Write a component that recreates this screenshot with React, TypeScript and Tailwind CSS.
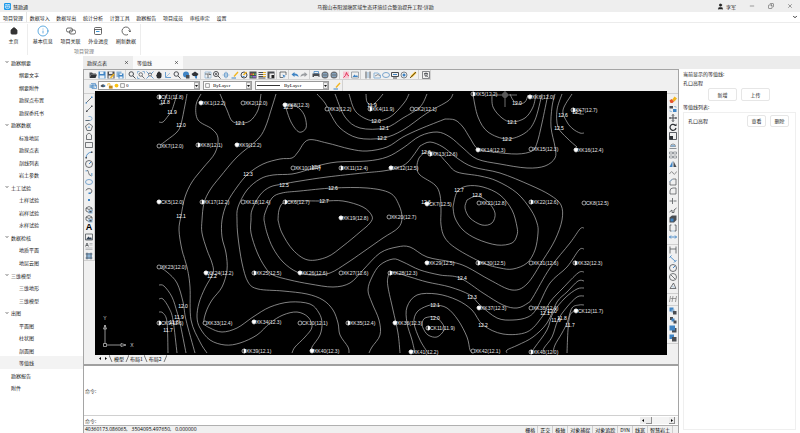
import React from "react";
import { ChevronDown, Copy, House, Info, Minus, RefreshCw, User, X } from "lucide-react";

const K = "#4a4d52";
const B = "#3f84c4";
const L = "#8db4d6";
const Y = "#f2b51d";

type Shape = { d: string; s?: string; f?: string; w?: number };

const glyphs: Record<string, Shape[]> = {
  open: [{ d: "M1 3h5l2 2h6v2H4l-3 6z", f: K }, { d: "M4 7h12l-3 7H1z", f: "#2f3236" }],
  save: [{ d: "M1 1h14v14H1z", f: B }, { d: "M4 1h7v5H4zM3 9h10v6H3z", f: "#e6eef6" }],
  saveAs: [{ d: "M1 1h14v14H1z", f: K }, { d: "M4 1h7v5H4zM3 9h10v6H3z", f: "#e6e6e6" }, { d: "M7 14l7-8", s: Y, w: 3 }],
  saveAll: [{ d: "M1 1h10v11H1z", f: L }, { d: "M5 5h10v10H5z", f: B }, { d: "M7 5h5v3H7zM7 11h6v4H7z", f: "#eef3f8" }],
  zoom: [{ d: "M2 6a4.500 4.500 0 1 0 9 0a4.500 4.500 0 1 0 -9 0M10 10l5 5", s: K, w: 2 }],
  zoomPlus: [{ d: "M1 6a5 5 0 1 0 10 0a5 5 0 1 0 -10 0M10 10l5 5M4 6h4M6 4v4", s: K, w: 2 }],
  zoomWin: [{ d: "M1 5V1h4M11 1h4v4M1 11v4h4", s: L, w: 2 }, { d: "M4 7a3 3 0 1 0 7 0a3 3 0 1 0 -7 0M10 10l5 5", s: K, w: 1.5 }],
  extents: [{ d: "M1 1l5 5M15 1l-5 5M1 15l5-5M15 15l-5-5", s: B, w: 1.5 }, { d: "M5 7a3 3 0 1 0 6 0a3 3 0 1 0 -6 0", s: K, w: 1.5 }],
  hand: [{ d: "M4 5q0-2 2-2q0-2 2-2t2 2q3 0 3 3v4q0 5-5 5t-5-5L2 8l2-1z", f: "#2c2e31" }],
  axes: [{ d: "M3 2v11h11", s: B, w: 1.5 }, { d: "M3 13l9-9", s: L, w: 1.5 }],
  globe: [{ d: "M2 7a6 6 0 1 0 12 0a6 6 0 1 0 -12 0", f: B }, { d: "M8 8h7v7H8z", f: K }],
  orbit: [{ d: "M1 6l7-5 7 5-3 4H4z", f: "#303338" }, { d: "M7 10h5v5H9z", f: B }],
  area: [{ d: "M2 2h12v12H2z", s: L, w: 1.5 }, { d: "M2 6h6v8M10 3v4h4", s: K, w: 1.5 }],
  pan: [{ d: "M8 1v14M1 8h14", s: L, w: 1.5 }, { d: "M5 4h6v8H5z", s: B, w: 1.2 }],
  brush: [{ d: "M5 10l8-9 2 2-8 9z", f: Y }, { d: "M1 14h9", s: B, w: 2 }],
  target: [{ d: "M2 8a6 6 0 1 0 12 0a6 6 0 1 0 -12 0", s: K, w: 2 }, { d: "M7 8l6-6", s: Y, w: 3 }, { d: "M5 11h4", s: B, w: 2 }],
  palette: [{ d: "M1 1h14v14H1z", f: K }, { d: "M3 5h3v3H3z", f: "#e14b4b" }, { d: "M7 5h3v3H7z", f: Y }, { d: "M11 5h3v3h-3zM3 10h3v3H3z", f: "#4fb36b" }, { d: "M7 10h7v3H7z", f: "#8d6ad0" }],
  lines: [{ d: "M1 3h14M1 7h14M1 11h14M1 14h14", s: K, w: 2 }, { d: "M10 3h5M10 7h5M10 11h5", s: Y, w: 2 }],
  props: [{ d: "M1 1h14v14H1z", f: K }, { d: "M5 5h9v9H5z", f: "#ececec" }, { d: "M9 8h5v6H9z", f: "#222" }],
  select: [{ d: "M14 8V2H2v11h6", s: K, w: 1.5 }, { d: "M7 7l7 3-3 1-1 4z", f: B }],
  undo: [{ d: "M1 7l6-5v3q8 0 8 7q-3-4-8-3v3z", f: B }],
  redo: [{ d: "M15 7L9 2v3q-8 0-8 7q3-4 8-3v3z", f: "#9a9da1" }],
  print: [{ d: "M4 1h9v4H4z", s: B, w: 1.5 }, { d: "M1 5h14v7H1z", f: K }, { d: "M4 10h9v5H4z", f: "#e8e8e8" }],
  printView: [{ d: "M1 8a7 7 0 1 0 14 0a7 7 0 1 0 -14 0", f: "#6b7076" }, { d: "M4 5h8M3 8h10M4 11h8", s: L, w: 1.5 }],
  pdf: [{ d: "M2 1h12v14H2z", f: "#f7c6d2" }, { d: "M3 13q5-3 6-10q1 6 5 7", s: "#e2365d", w: 2 }],
  image: [{ d: "M1 2h14v12H1z", s: "#8a8e93", w: 1.5 }, { d: "M3 12l4-5 3 3 2-2 2 4z", f: B }],
  ruler: [{ d: "M4 1v14M12 1v14", s: "#74787d", w: 2.5 }, { d: "M8 2v12", s: L, w: 2 }],
  region: [{ d: "M2 4h8l5 4v6H2z", s: L, w: 2 }, { d: "M4 10l6-3 4 3", s: K, w: 1.2 }],
  ellipse: [{ d: "M1 8a7 5 0 1 0 14 0a7 5 0 1 0 -14 0", s: "#6b9cc8", w: 1.8 }],
  screen: [{ d: "M1 3h14v8H1zM4 14h8", s: K, w: 2 }, { d: "M4 7h8", s: B, w: 2 }],
  gear: [{ d: "M2 8a6 6 0 1 0 12 0a6 6 0 1 0 -12 0", s: "#74787d", w: 1.8 }, { d: "M5 8a3 3 0 1 0 6 0a3 3 0 1 0 -6 0", f: B }],
  pencil: [{ d: "M2 14l2-5 8-8 3 3-8 8z", f: Y }, { d: "M2 14L14 2", s: "#3c3a30", w: 1.6 }],
  find: [{ d: "M1 1h14v14H1z", s: K, w: 1.3 }, { d: "M5 7a3 3 0 1 0 6 0a3 3 0 1 0 -6 0M4 5h8M8 4v8M10 10l3 3", s: K, w: 1.4 }],
  layers: [{ d: "M1 5h10v7H1z", f: L }, { d: "M4 3h9v6M6 6h9v7H6z", s: B, w: 1.3 }],
  line: [{ d: "M2 14L14 2", s: K, w: 1.5 }, { d: "M1 13h3v2H1zM12 1h3v3h-3z", f: B }],
  ray: [{ d: "M2 14L14 2", s: K, w: 1.5 }, { d: "M2 11h3v3H2zM12 1h3v3h-3z", f: K }],
  pline: [{ d: "M1 13h9q4 0 4-4T10 5H7", s: L, w: 2 }, { d: "M1 13h8", s: K, w: 1.5 }],
  poly: [{ d: "M8 1l7 5-3 9H4L1 6z", s: K, w: 1.5 }, { d: "M6 7h4v3H6z", f: L }],
  house: [{ d: "M3 15V6l5-4 5 4v9z", s: K, w: 1.5 }],
  rect: [{ d: "M1 3h14v10H1z", s: K, w: 1.5 }],
  arc: [{ d: "M2 14Q3 3 14 2", s: B, w: 1.7 }, { d: "M1 12h3v3H1zM12 1h3v3h-3z", f: K }],
  circle: [{ d: "M1 8a7 7 0 1 0 14 0a7 7 0 1 0 -14 0", s: K, w: 1.6 }, { d: "M8 8l4-4", s: B, w: 2 }],
  spline: [{ d: "M2 3q5-2 5 4t7 7", s: K, w: 1.5 }, { d: "M1 2h3v3H1zM12 8h3v6h-3z", f: L }],
  earc: [{ d: "M2 7a6 5 0 1 1 7 6", s: K, w: 1.6 }, { d: "M7 11h4v3H7z", f: B }],
  dot: [{ d: "M6 6h4v4H6z", f: B }],
  block: [{ d: "M2 4l6-3 6 3v6l-6 3-6-3zM2 4l6 3 6-3", s: K, w: 1.5 }, { d: "M7 8h8v7H7z", f: L }, { d: "M9 10h4v3H9z", f: K }],
  pic: [{ d: "M1 2h14v12H1z", s: K, w: 1.5 }, { d: "M2 13l5-6 3 3 2-2 2 5z", f: "#2e3f52" }],
  mtext: [{ d: "M1 9l3-7 3 7M2 7h4", s: K, w: 1.5 }, { d: "M9 3h6M9 6h6M1 12h14M1 15h14", s: "#9a9da1", w: 1.3 }],
  hatch: [{ d: "M2 2h12v12H2z", f: L }, { d: "M1 4h14M1 12h14M4 1v14M12 1v14", s: K, w: 1.2 }],
  erase: [{ d: "M6 8l5-7 5 4-5 6z", f: Y }, { d: "M1 9l4-3 5 5-3 3H3z", f: "#e5532d" }],
  copy: [{ d: "M1 2h7v5H1z", f: K }, { d: "M8 8h7v6H8z", f: B }, { d: "M10 3h4v3M2 9v4h4", s: L, w: 1.5 }],
  move: [{ d: "M8 1v14M1 8h14M6 3l2-2 2 2M6 13l2 2 2-2M3 6L1 8l2 2M13 6l2 2-2 2", s: K, w: 2 }],
  rotate: [{ d: "M12 4a6 6 0 1 0 2 6", s: "#2f3236", w: 2.5 }, { d: "M10 6h5V1z", f: "#2f3236" }],
  scale: [{ d: "M1 1h14v14H1z", s: K, w: 1.8 }, { d: "M1 8h7v7H1z", f: "#2f3236" }],
  offset: [{ d: "M1 13h14M3 9a5 5 0 0 1 10 0z", s: "#74787d", w: 1.6 }, { d: "M4 6h8v3H4z", f: L }],
  array: [{ d: "M1 2h6v4H1zM9 2h6v4H9zM1 10h6v4H1zM9 10h6v4H9z", s: "#858a90", w: 1.6 }],
  mirror: [{ d: "M7 2v12H1z", f: B }, { d: "M9 2v12h6z", f: K }],
  wave: [{ d: "M1 10q4-8 7-2t7-3", s: "#777", w: 1.6 }],
  chamfer: [{ d: "M2 14V7l5-5h7v12z", s: K, w: 1.4 }, { d: "M1 8l6-6", s: L, w: 2 }],
  fillet: [{ d: "M2 14V8q0-6 6-6h6v12z", s: K, w: 1.4 }],
  trim: [{ d: "M1 8h6M9 8h6M7 2v12", s: K, w: 1.5 }],
  extend: [{ d: "M1 12l5-4v5h4V8l5-4", s: K, w: 1.6 }],
  cube: [{ d: "M1 5l5-4h9v9l-5 5H1z", f: K }, { d: "M3 7h6v6H3z", f: B }],
  brk: [{ d: "M5 2H2v12h3M11 2h3v12h-3", s: K, w: 1.6 }, { d: "M5 14h6", s: L, w: 1.5 }],
  join: [{ d: "M1 8h14M4 5L1 8l3 3M12 5l3 3-3 3", s: B, w: 1.8 }],
  dimh: [{ d: "M2 1v14M14 1v14", s: K, w: 1.5 }, { d: "M2 6h12", s: K, w: 1.5 }],
  dima: [{ d: "M2 3l11 10M1 5l4-4M10 15l5-5", s: B, w: 1.7 }],
  diam: [{ d: "M1 8a7 7 0 1 0 14 0a7 7 0 1 0 -14 0M4 4l8 8", s: K, w: 1.5 }],
  angle: [{ d: "M2 13L9 2l5 11z", s: K, w: 1.5 }, { d: "M6 8l5 3", s: L, w: 1.5 }],
  dimc: [{ d: "M1 14l2-12M8 2l-2 12M15 2l-2 12M3 7h11", s: "#777", w: 1.4 }],
  ordA: [{ d: "M1 1h8v8H1z", f: B }, { d: "M5 5h6v6H5z", f: L }, { d: "M8 8h7v7H8z", f: K }],
  ordB: [{ d: "M2 2h6v6H2z", f: K }, { d: "M5 5h6v6H5z", f: B }, { d: "M9 9h6v6H9z", f: K }],
  ordC: [{ d: "M6 6h9v9H6z", f: K }, { d: "M1 1h11v10H1z", f: B }],
  ordD: [{ d: "M1 1h9v9H1z", f: B }, { d: "M6 6h9v9H6z", f: K }],
  eye: [{ d: "M1 8q7-9 14 0q-7 7-14 0", f: K }, { d: "M9 5h4v4H9z", f: B }],
  lock: [{ d: "M2 7V2h6v5", s: Y, w: 2 }, { d: "M5 7h10v8H5z", f: "#c58a18" }],
  sun: [{ d: "M2 8a6 6 0 1 0 12 0a6 6 0 1 0 -12 0", f: "#fbc110" }],
  box: [{ d: "M2 2h12v12H2z", s: "#333", w: 1.5 }],
};

function Glyph({ name, className = "size-2" }: { name: string; className?: string }) {
  return (
    <svg viewBox="0 0 16 16" className={`${className} shrink-0`} aria-hidden="true">
      {glyphs[name].map((p, i) => (
        <path key={i} d={p.d} fill={p.f ?? "none"} stroke={p.s ?? "none"} strokeWidth={p.w ?? 1.5} />
      ))}
    </svg>
  );
}

function Tool({ name }: { name: string }) {
  return (
    <button type="button" aria-label={name} className="flex w-[9px] items-center justify-center">
      <Glyph name={name} />
    </button>
  );
}

const topTools = [
  ["open", "save", "saveAs", "saveAll"],
  ["zoom", "zoomWin", "extents", "hand", "axes", "zoom", "globe", "orbit"],
  ["area", "zoomPlus", "pan", "brush", "target", "palette", "lines", "props"],
  ["select"],
  ["undo", "redo"],
  ["print", "printView", "printView"],
  ["pdf", "image"],
  ["ruler", "region", "ellipse", "screen", "gear", "pencil"],
  ["find"],
];

const drawTools = ["line", "ray", "pline", "poly", "house", "rect", "arc", "circle", "spline", "ellipse", "earc", "dot", "block", "block", "A", "pic", "mtext", "hatch"];

const editTools: { h: string; items: string[] }[] = [
  { h: "h-[147px]", items: ["erase", "copy", "move", "rotate", "scale", "offset", "array", "mirror", "wave", "chamfer", "fillet", "trim", "extend", "cube", "brk", "join"] },
  { h: "h-[46px]", items: ["dimh", "dima", "circle", "diam", "angle"] },
  { h: "h-[9px]", items: ["dimc"] },
  { h: "h-[37px]", items: ["ordA", "ordB", "ordC", "ordD"] },
];

type P = [number, number];

const contours: P[][] = [
  [[159, 104], [163, 104], [167, 94]],
  [[159, 122], [163, 122], [168, 116], [172, 110], [177, 94]],
  [[159, 146], [167, 140], [177, 132], [181, 124], [185, 105], [187, 94]],
  [[201, 94], [196, 105], [198, 120], [212, 129], [218, 138], [215, 153], [203, 168], [192, 182], [185, 197], [181, 216], [179, 230], [182, 250], [187, 267], [190, 287], [191, 320], [200, 342], [207, 353]],
  [[276, 94], [272, 107], [265, 128], [257, 140], [237, 157], [220, 177], [210, 190], [204, 203], [202, 220], [202, 233], [207, 250], [212, 263], [213, 273], [205, 288], [199, 303], [197, 317], [200, 328], [210, 340], [225, 345], [240, 343], [257, 335], [270, 323], [283, 315], [297, 312], [308, 317], [312, 327], [305, 337], [295, 347], [292, 353]],
  [[445, 119], [420, 129], [403, 137], [387, 147], [367, 151], [350, 149], [327, 143], [308, 140], [298, 152], [292, 158], [280, 159], [263, 164], [248, 174], [237, 187], [227, 203], [222, 220], [222, 237], [226, 253], [227, 270], [222, 287], [212, 300], [206, 312], [204, 323], [210, 328], [222, 332], [237, 328], [253, 317], [270, 307], [290, 302], [310, 304], [319, 313], [322, 323], [320, 335], [312, 347], [311, 353]],
  [[445, 119], [455, 120], [463, 127], [470, 138], [478, 149], [493, 152], [517, 154], [532, 151], [537, 143], [542, 123], [548, 94]],
  [[555, 94], [552, 107], [551, 127], [555, 147], [555, 158], [545, 166], [527, 168], [500, 164], [477, 159], [463, 148], [450, 137], [437, 132], [420, 136], [403, 148], [387, 157], [367, 161], [337, 162], [317, 166], [307, 170], [292, 174], [273, 175], [260, 179], [247, 190], [238, 207], [237, 220], [238, 237], [242, 263], [248, 282], [258, 289], [283, 291], [307, 294], [323, 300], [333, 310], [338, 323], [340, 335], [348, 347], [349, 353]],
  [[420, 146], [408, 162], [397, 168], [383, 171], [363, 173], [327, 177], [300, 181], [283, 184], [270, 187], [260, 195], [252, 210], [251, 220], [251, 233], [257, 252], [265, 267], [273, 275], [290, 280], [310, 284], [333, 287], [350, 283], [363, 270], [380, 253], [397, 247], [410, 247], [427, 257], [452, 262], [467, 267], [490, 280], [512, 290], [527, 284], [543, 260], [555, 240], [562, 220], [561, 205], [550, 195], [530, 185], [500, 173], [473, 167], [457, 158], [443, 147], [430, 142], [420, 146]],
  [[264, 220], [265, 213], [272, 198], [282, 193], [300, 191], [333, 188], [367, 188], [390, 193], [399, 205], [402, 218], [398, 228], [383, 238], [363, 252], [347, 263], [330, 273], [313, 275], [297, 272], [283, 262], [273, 248], [267, 233], [264, 220]],
  [[278, 220], [279, 210], [283, 203], [293, 201], [323, 201], [343, 201], [363, 207], [372, 216], [370, 223], [360, 232], [343, 246], [327, 257], [308, 260], [293, 250], [282, 233], [278, 220]],
  [[349, 94], [356, 112], [373, 121], [390, 117], [404, 103], [409, 94]],
  [[335, 94], [345, 117], [360, 128], [385, 128], [403, 118], [420, 107], [427, 94]],
  [[317, 94], [325, 103], [330, 113], [340, 128], [358, 138], [383, 138], [403, 130], [427, 113], [448, 101], [453, 94]],
  [[366, 94], [367, 102], [372, 105], [378, 100], [383, 94]],
  [[220, 94], [227, 110], [232, 121], [240, 123], [250, 121], [258, 110], [261, 94]],
  [[285, 105], [291, 122], [299, 132], [306, 128], [305, 117], [300, 109], [293, 105], [285, 105]],
  [[425, 152], [419, 158], [417, 167], [420, 175], [435, 185], [440, 195], [441, 210], [441, 225], [445, 238], [457, 249], [483, 263], [500, 268], [513, 269], [527, 263], [535, 250], [538, 233], [537, 223], [531, 210], [517, 193], [497, 181], [480, 176], [457, 172], [447, 163], [437, 153], [425, 152]],
  [[453, 207], [457, 192], [467, 186], [483, 187], [500, 195], [512, 210], [517, 227], [517, 235], [512, 243], [497, 245], [477, 239], [463, 230], [455, 218], [453, 207]],
  [[467, 200], [477, 196], [488, 202], [495, 213], [492, 223], [482, 225], [470, 218], [465, 208], [467, 200]],
  [[473, 95], [478, 117], [488, 132], [507, 139], [525, 133], [535, 120], [542, 94]],
  [[492, 94], [493, 107], [502, 118], [512, 122], [525, 118], [533, 107], [536, 94]],
  [[510, 94], [513, 100], [518, 104], [525, 102], [528, 95]],
  [[562, 94], [557, 110], [558, 127], [567, 138], [577, 147]],
  [[572, 94], [563, 110], [567, 122], [573, 129], [580, 133], [584, 133]],
  [[575, 112], [580, 114], [584, 114]],
  [[159, 267], [167, 272], [177, 283], [183, 302], [186, 320], [195, 353]],
  [[159, 285], [164, 286], [172, 297], [177, 312], [180, 323], [186, 353]],
  [[159, 299], [163, 299], [169, 308], [173, 320], [177, 353]],
  [[159, 312], [163, 313], [167, 322], [168, 353]],
  [[584, 228], [580, 229], [570, 243], [550, 268], [533, 297], [528, 303], [517, 308], [503, 305], [483, 293], [460, 278], [440, 275], [420, 270], [403, 262], [393, 259], [380, 265], [372, 277], [368, 290], [372, 303], [379, 320], [380, 335], [372, 347], [369, 353]],
  [[584, 249], [579, 250], [567, 267], [550, 283], [537, 308], [528, 317], [513, 320], [497, 318], [480, 305], [470, 295], [450, 287], [427, 282], [410, 277], [392, 272], [388, 277], [388, 287], [393, 310], [398, 333], [400, 353]],
  [[584, 272], [578, 273], [563, 288], [550, 302], [542, 317], [527, 332], [503, 334], [483, 325], [472, 310], [457, 300], [437, 294], [417, 295], [407, 307], [407, 323], [412, 340], [415, 353]],
  [[428, 353], [420, 340], [414, 323], [417, 312], [427, 306], [435, 305], [447, 308], [458, 320], [467, 337], [470, 350], [473, 353]],
  [[422, 323], [425, 318], [435, 317], [442, 323], [444, 330], [437, 337], [428, 335], [423, 328], [422, 323]],
  [[584, 281], [578, 281], [567, 292], [557, 302], [547, 323], [533, 337], [518, 345], [507, 350], [507, 353]],
  [[584, 288], [577, 289], [565, 298], [553, 313], [547, 330], [535, 347], [531, 353]],
  [[584, 296], [577, 297], [567, 307], [558, 320], [552, 337], [544, 348], [543, 353]],
  [[584, 305], [579, 305], [572, 308], [567, 323], [562, 333], [555, 345], [553, 353]],
  [[575, 311], [570, 315], [568, 330], [567, 353]],
];

// Catmull-Rom spline through every point of a contour, written as cubic Béziers.
function curve(p: P[]): string {
  let d = `M${p[0][0]} ${p[0][1]}`;
  for (let i = 0; i < p.length - 1; i++) {
    const a = p[Math.max(i - 1, 0)];
    const b = p[i];
    const c = p[i + 1];
    const e = p[Math.min(i + 2, p.length - 1)];
    d += `C${b[0] + (c[0] - a[0]) / 6} ${b[1] + (c[1] - a[1]) / 6} ${c[0] - (e[0] - b[0]) / 6} ${c[1] - (e[1] - b[1]) / 6} ${c[0]} ${c[1]}`;
  }
  return d;
}

type Kind = "h" | "t" | "o";
const holes: [number, number, Kind, string][] = [
  [159, 97, "h", "CK1(11.8)"], [201, 103, "t", "XK1(12.2)"], [243, 103, "o", "XK2(12.0)"], [285, 105, "t", "XK8(12.3)"],
  [327, 109, "o", "XK3(12.2)"], [370, 109, "h", "XK4(11.9)"], [412, 109, "o", "CK2(12.1)"], [473, 94, "h", "XK5(12.2)"],
  [530, 97, "t", "XK6(12.0)"], [573, 110, "h", "XK7(12.7)"],
  [159, 146, "o", "XK7(12.0)"], [198, 145, "h", "XK8(12.1)"], [237, 145, "t", "XK9(12.2)"], [293, 168, "o", "XK10(12.4)"],
  [341, 168, "h", "XK11(12.4)"], [391, 168, "t", "XK12(12.5)"], [430, 154, "h", "XK13(12.6)"], [478, 150, "t", "XK14(12.3)"],
  [531, 149, "o", "XK15(12.3)"], [576, 150, "t", "XK16(12.4)"],
  [159, 202, "t", "CK5(12.0)"], [202, 202, "h", "XK17(12.2)"], [243, 202, "o", "XK18(12.4)"], [285, 202, "h", "CK6(12.7)"],
  [341, 218, "t", "XK19(12.8)"], [389, 217, "o", "XK20(12.7)"], [427, 204, "t", "CK7(12.5)"], [479, 203, "o", "XK21(12.8)"],
  [531, 202, "h", "XK22(12.6)"], [584, 203, "o", "CK8(12.5)"],
  [159, 267, "o", "XK23(12.0)"], [206, 273, "t", "XK24(12.2)"], [254, 273, "h", "XK25(12.5)"], [300, 273, "t", "XK26(12.6)"],
  [341, 273, "o", "XK27(12.6)"], [390, 273, "h", "XK28(12.3)"], [427, 263, "t", "XK29(12.5)"], [478, 263, "h", "XK30(12.5)"],
  [531, 263, "o", "XK31(12.6)"], [575, 263, "h", "XK32(12.3)"],
  [159, 323, "h", "CK9(11.6)"], [205, 323, "o", "XK33(12.4)"], [254, 322, "t", "XK34(12.3)"], [300, 323, "o", "CK10(12.1)"],
  [348, 323, "h", "XK35(12.4)"], [395, 323, "t", "XK36(12.3)"], [428, 328, "h", "CK11(11.9)"], [479, 308, "t", "XK37(12.3)"],
  [531, 308, "o", "XK38(12.4)"], [576, 311, "t", "CK12(11.7)"],
  [244, 351, "h", "XK39(12.1)"], [312, 351, "t", "XK40(12.3)"], [411, 352, "t", "XK41(12.2)"], [473, 351, "o", "XK42(12.1)"],
  [531, 352, "h", "XK43(12.0)"],
];

const levels: [number, number, string][] = [
  [165, 102, "11.8"], [172, 112, "11.9"], [181, 125, "12.0"], [240, 123, "12.1"], [288, 107, "12.3"], [372, 105, "11.9"],
  [376, 121, "12.0"], [384, 128, "12.1"], [382, 138, "12.2"], [248, 174, "12.3"], [316, 167, "12.4"], [284, 185, "12.5"],
  [333, 188, "12.6"], [324, 201, "12.7"], [181, 216, "12.1"], [212, 276, "12.2"], [517, 103, "12.0"], [512, 122, "12.1"],
  [507, 139, "12.2"], [563, 115, "12.6"], [559, 128, "12.5"], [577, 112, "12.7"], [426, 152, "12.6"], [459, 190, "12.7"],
  [477, 195, "12.8"], [426, 202, "12.6"], [183, 306, "12.0"], [179, 317, "11.9"], [174, 322, "11.8"], [168, 330, "11.7"],
  [462, 278, "12.4"], [472, 297, "12.3"], [483, 325, "12.2"], [435, 305, "12.1"], [435, 318, "12.0"],
  [545, 313, "12.1"], [552, 311, "12.0"], [556, 320, "11.9"], [562, 318, "11.8"], [570, 325, "11.7"],
];

function Drawing() {
  return (
    <svg viewBox="95 91 572 264" className="block h-full w-full bg-black font-['Liberation_Sans',sans-serif] text-[5px]" role="img" aria-label="等值线">
      <g fill="none" stroke="#b9b9b9" strokeWidth="0.7">
        {contours.map((c, i) => <path key={i} d={curve(c)} />)}
      </g>
      <g fill="none" stroke="#8a8a8a" strokeWidth="0.8">
        <path d="M493 95H517M505 91V107M503 93h4v4h-4z" />
      </g>
      {holes.map(([x, y, k, label], i) => (
        <g key={i}>
          <circle cx={x} cy={y} r="2" fill="#000" stroke="#fff" strokeWidth="0.6" />
          {k === "h" && <path d={`M${x} ${y - 2}a2 2 0 0 1 0 4z`} fill="#fff" stroke="#fff" strokeWidth="0.6" />}
          {k === "t" && <path d={`M${x - 2} ${y}a2 2 0 0 1 4 0L${x} ${y + 2}z`} fill="#fff" stroke="#fff" strokeWidth="0.5" />}
          <text x={x + 2} y={y + 2} fill="#e6e6e6">{label}</text>
        </g>
      ))}
      {levels.map(([x, y, label], i) => (
        <text key={i} x={x} y={y + 2} textAnchor="middle" fill="#fff">{label}</text>
      ))}
      <g fill="none" stroke="#d0d0d0" strokeWidth="0.7">
        <path d="M103.500 343.500h3v3h-3zM105 343.500V325M107 345H121M103.500 329l1.500-4 1.500 4zM121 343.500l5 1.500-5 1.500z" />
      </g>
      <text x="105" y="320" textAnchor="middle" fill="#d0d0d0">Y</text>
      <text x="132" y="347" textAnchor="middle" fill="#d0d0d0">X</text>
    </svg>
  );
}

const menus = ["项目管理", "数据导入", "数据导出", "统计分析", "计算工具", "勘察报告", "项目成员", "审核审定", "设置"];

const tree: [string, "group" | "item" | "leaf"][] = [
  ["勘察纲要", "group"], ["纲要文字", "item"], ["纲要附件", "item"], ["勘探点布置", "item"], ["勘探委托书", "item"],
  ["勘察数据", "group"], ["标准地层", "item"], ["勘探点表", "item"], ["剖线列表", "item"], ["岩土参数", "item"],
  ["土工试验", "group"], ["土样试验", "item"], ["岩样试验", "item"], ["水样试验", "item"],
  ["数据检核", "group"], ["地质平面", "item"], ["地层云图", "item"],
  ["三维模型", "group"], ["三维地形", "item"], ["三维模型", "item"],
  ["出图", "group"], ["平面图", "item"], ["柱状图", "item"], ["剖面图", "item"], ["等值线", "item"],
  ["勘察报告", "leaf"], ["附件", "leaf"],
];

function RibbonButton({ label, children, w }: { label: string; children: React.ReactNode; w: string }) {
  return (
    <button type="button" className={`flex ${w} flex-col items-center pt-px`}>
      <span className="flex h-3 items-center">{children}</span>
      <span>{label}</span>
    </button>
  );
}

function Picker({ label, value, width, pad, children }: { label: string; value: string; width: string; pad: string; children: React.ReactNode }) {
  return (
    <label className={`relative block h-[9px] ${width}`}>
      <span className="sr-only">{label}</span>
      <select className={`block h-[9px] w-full appearance-none border border-[#9a9a9a] bg-white font-['Liberation_Serif',serif] text-[5px] leading-[7px] text-black ${pad}`}>
        <option>{value}</option>
      </select>
      <span className="pointer-events-none absolute inset-y-0 left-[2px] flex items-center gap-px">{children}</span>
      <span className="pointer-events-none absolute inset-y-px right-px flex w-[5px] items-center justify-center border border-[#b0b0b0] bg-[#eeeeee]">
        <svg viewBox="0 0 6 4" className="h-[2px] w-[3px] shrink-0"><path d="M0 0h6L3 4z" fill="#111" /></svg>
      </span>
    </label>
  );
}

const panelButton = "rounded-[2px] border border-[#e6e6e6] bg-white text-center";

export default function App() {
  return (
    <div className="flex h-screen flex-col overflow-hidden bg-white font-['Noto_Sans_CJK_SC',sans-serif] text-[5px] leading-[7px] text-[#1a1a1a]">
      <header className="flex h-3 shrink-0 items-center bg-[#eeeeee] px-1">
        <div className="flex flex-1 items-center gap-[2px]">
          <svg viewBox="0 0 16 16" className="size-[7px]" aria-hidden="true">
            <rect width="16" height="16" rx="3" fill="#1797ea" />
            <path d="M2 5q2-3 6-1q4-2 6 1M3 7h10v4q-5 4-10 0z" fill="none" stroke="#fff" strokeWidth="1.600" />
            <path d="M6 9h4" stroke="#fff" strokeWidth="1.500" />
          </svg>
          <span>慧勘通</span>
        </div>
        <h1 className="pr-[46px]">马鞍山市阳湖塘区域生态环境综合整治提升工程-详勘</h1>
        <div className="flex flex-1 items-center justify-end gap-[13px] pr-[3px]">
          <span className="flex items-center gap-[2px]"><User className="size-[7px] fill-[#222] text-[#222]" strokeWidth={2} />李军</span>
          <button type="button" aria-label="最小化"><Minus className="size-[6px] text-[#444]" /></button>
          <button type="button" aria-label="还原"><Copy className="size-[6px] -scale-x-100 text-[#444]" /></button>
          <button type="button" aria-label="关闭"><X className="size-[6px] text-[#444]" /></button>
        </div>
      </header>

      <nav className="flex h-[11px] shrink-0 items-stretch justify-between border-b border-[#ececec]">
        <div className="flex w-[240px]">
          {menus.map((m, i) => (
            <button key={m} type="button" className={`flex-1 border-r pl-[3px] text-left ${i === 0 ? "border-[#e4e4e4]" : "border-transparent"}`}>{m}</button>
          ))}
        </div>
        <button type="button" aria-label="收起" className="pr-[2px]"><ChevronDown className="size-[6px] text-[#333]" strokeWidth={4} /></button>
      </nav>

      <section className="flex h-[33px] shrink-0 items-stretch">
        <div className="my-px flex w-7 border-r border-[#ededed]">
          <RibbonButton label="主页" w="w-full"><House className="size-2 fill-[#333] text-[#333]" strokeWidth={2.5} /></RibbonButton>
        </div>
        <div className="my-px flex w-[113px] flex-col border-r border-[#ededed]">
          <div className="flex pl-px">
            <RibbonButton label="基本信息" w="flex-1"><Info className="size-3 text-[#3a97d8]" strokeWidth={1.6} /></RibbonButton>
            <RibbonButton label="项目关联" w="flex-1">
              <svg viewBox="0 0 20 16" className="h-2 w-[10px]" fill="none" stroke="#444" strokeWidth="1.600"><rect x="1" y="2" width="12" height="8" rx="3" /><rect x="7" y="6" width="12" height="8" rx="3" /></svg>
            </RibbonButton>
            <RibbonButton label="外业进度" w="flex-1">
              <svg viewBox="0 0 16 16" className="size-2" fill="none" stroke="#444" strokeWidth="1.600"><rect x="1" y="1" width="14" height="14" rx="2" /><path d="M1 5h14" /><path d="M4 9h7" stroke="#3a97d8" strokeWidth="2" /></svg>
            </RibbonButton>
            <RibbonButton label="刷新数据" w="flex-1">
              <svg viewBox="0 0 20 20" className="size-[10px]" fill="none" stroke="#444" strokeWidth="1.600"><path d="M14 17a8 8 0 1 1 4-6M15 9l3 3 2-3" /></svg>
            </RibbonButton>
          </div>
          <div className="mt-[3px] text-center text-[#777]">项目管理</div>
        </div>
      </section>

      <div className="flex min-h-0 flex-1">
        <aside className="w-[83px] shrink-0">
          <ul className="flex h-[338px] flex-col">
            {tree.map(([name, kind], i) => (
              <li key={i} className={`flex flex-1 ${name === "等值线" ? "bg-[#f3f3f3]" : ""}`}>
                <button type="button" className={`flex w-full items-center text-left ${kind === "group" ? "gap-[2px] pl-[5px]" : kind === "item" ? "pl-[19px]" : "pl-[11px]"}`}>
                  {kind === "group" && <ChevronDown className="size-1" strokeWidth={4} />}
                  {name}
                </button>
              </li>
            ))}
          </ul>
        </aside>

        <div className="flex min-w-0 flex-1 flex-col">
          <div className="flex h-[13px] shrink-0 bg-[#ececec]">
            {["勘探点表", "等值线"].map((t, i) => (
              <div key={t} className={`flex w-[50px] items-center justify-between px-1 ${i === 1 ? "bg-[#fafafa]" : ""}`}>
                <button type="button">{t}</button>
                <button type="button" aria-label="关闭标签"><X className="size-[5px]" strokeWidth={2.5} /></button>
              </div>
            ))}
          </div>

          <div className="flex min-h-0 flex-1">
            <main className="flex min-w-0 flex-1 flex-col border-x border-t border-[#a5a5a5] bg-[#f0f0f0]">
              <div className="flex h-[10px] w-fit items-stretch border-r border-b border-[#d2d2d2] pl-1">
                {topTools.map((g, i) => (
                  <div key={i} className={`flex ${i === 0 ? "" : i === 2 || i > 6 ? "ml-px border-l border-[#d0d0d0] pl-[2px]" : "ml-px border-l border-[#d0d0d0] pl-px"}`}>
                    {g.map((n, j) => <Tool key={j} name={n} />)}
                  </div>
                ))}
              </div>
              <div className="flex h-[11px] w-fit items-center gap-[3px] border-r border-[#d2d2d2] pr-px pl-1">
                <div className="flex items-center gap-px">
                  <Tool name="layers" />
                  <Picker label="图层" value="0" width="w-[102px]" pad="pl-[27px]">
                    <Glyph name="eye" className="size-[6px]" />
                    <Glyph name="lock" className="size-[6px]" />
                    <Glyph name="sun" className="size-[5px]" />
                    <Glyph name="box" className="size-[5px]" />
                  </Picker>
                </div>
                <Picker label="颜色" value="ByLayer" width="w-[49px]" pad="pl-[9px]"><Glyph name="box" className="size-[5px]" /></Picker>
                <Picker label="线型" value="ByLayer" width="w-[74px]" pad="pl-[28px]"><span className="h-px w-[23px] bg-[#333]" /></Picker>
                <Tool name="brush" />
              </div>

              <div className="flex min-h-0 flex-1">
                <div className="w-[11px] shrink-0 pt-[2px]">
                  <div className="flex h-[168px] flex-col border-t border-r border-b border-[#cfcfcf] pt-px">
                    {drawTools.map((n, i) => (
                      <button key={i} type="button" aria-label={n} className="flex flex-1 items-center justify-center">
                        {n === "A" ? <b className="font-['Liberation_Sans',sans-serif] text-[9px] leading-[9px] text-black">A</b> : <Glyph name={n} />}
                      </button>
                    ))}
                  </div>
                </div>
                <div className="flex min-w-0 flex-1 flex-col">
                  <div className="min-h-0 flex-1 bg-black"><Drawing /></div>
                  <div className="flex h-[9px] shrink-0 items-start pl-[2px] text-black">
                    <button type="button" aria-label="上一页" className="flex h-[7px] w-[6px] items-center justify-center"><svg viewBox="0 0 4 6" className="h-[3px] w-[2px]"><path d="M4 0v6L0 3z" /></svg></button>
                    <button type="button" aria-label="下一页" className="flex h-[7px] w-[6px] items-center justify-center"><svg viewBox="0 0 4 6" className="h-[3px] w-[2px]"><path d="M0 0v6L4 3z" /></svg></button>
                    {["模型", "布局1", "布局2"].map((t, i) => (
                      <React.Fragment key={t}>
                        <svg viewBox="0 0 4 7" className="h-[7px] w-1" stroke="#444" strokeWidth="0.700"><path d={i === 1 ? "M4 0L1 7" : "M0 0L3 7"} /></svg>
                        <button type="button" className="px-px">{t}</button>
                      </React.Fragment>
                    ))}
                    <svg viewBox="0 0 4 7" className="h-[7px] w-1" stroke="#444" strokeWidth="0.700"><path d="M4 0L1 7" /></svg>
                  </div>
                </div>
                <div className="w-[11px] shrink-0 pt-[2px]">
                  <div className="flex flex-col gap-[2px] border-t border-b border-[#cfcfcf] pt-px">
                    {editTools.map((g, i) => (
                      <div key={i} className={`flex ${g.h} flex-col ${i ? "box-content border-t border-[#cfcfcf]" : ""}`}>
                        {g.items.map((n) => (
                          <button key={n} type="button" aria-label={n} className="flex flex-1 items-center justify-center"><Glyph name={n} /></button>
                        ))}
                      </div>
                    ))}
                  </div>
                </div>
              </div>

              <section className="flex h-[61px] shrink-0 flex-col border-t-2 border-[#a0a0a0] bg-white">
                <div className="flex h-[50px] items-center border-b border-[#d0d0d0] pl-px text-[#444]">命令:</div>
                <div className="flex h-[9px] items-center">
                  <label htmlFor="command" className="w-4 pl-px text-[#444]">命令:</label>
                  <input id="command" className="h-[7px] min-w-0 flex-1 outline-none" />
                  <div className="flex h-[7px] w-[38px] items-stretch justify-between bg-[#f4f4f4] pr-[3px]">
                    <button type="button" aria-label="向左" className="flex w-[6px] items-center justify-center bg-[#ededed]"><svg viewBox="0 0 4 6" className="h-[3px] w-[2px]"><path d="M4 0v6L0 3z" /></svg></button>
                    <span className="mr-auto w-[6px] border-r border-b border-[#909090] bg-[#ececec]" />
                    <button type="button" aria-label="向右" className="flex w-[6px] items-center justify-center border-r border-b border-[#909090] bg-[#ececec]"><svg viewBox="0 0 4 6" className="h-[3px] w-[2px]"><path d="M0 0v6L4 3z" /></svg></button>
                  </div>
                </div>
              </section>
              <footer className="flex h-2 shrink-0 items-center justify-between border-t border-[#b0b0b0] pr-[5px] text-black">
                <span className="pl-px font-['Open_Sans',sans-serif] whitespace-pre">40360173.086065,   3504095.497650,   0.000000</span>
                <div className="flex">
                  {["栅格", "正交", "极轴", "对象捕捉", "对象追踪", "DYN", "线宽", "智慧岩土"].map((s) => (
                    <button key={s} type="button" className="border-r border-[#cdcdcd] px-[2px]">{s}</button>
                  ))}
                </div>
              </footer>
            </main>

            <aside className="flex w-[121px] shrink-0 flex-col pt-px pr-1 pb-[3px] pl-1">
              <p>当前显示的等值线:</p>
              <p className="mt-[2px]">孔口高程</p>
              <div className="mt-[2px] flex h-[13px] gap-1 pl-[25px]">
                <button type="button" className={`${panelButton} w-[29px]`}>新增</button>
                <button type="button" className={`${panelButton} w-[29px]`}>上传</button>
              </div>
              <p className="mt-[2px]">等值线列表:</p>
              <div className="mt-[2px] flex-1 border border-[#efefef]">
                <div className="flex h-[15px] items-center gap-1 pr-[6px] pl-1">
                  <span className="flex-1">孔口高程</span>
                  <button type="button" className={`${panelButton} h-3 w-[19px]`}>查看</button>
                  <button type="button" className={`${panelButton} h-3 w-[19px]`}>删除</button>
                </div>
              </div>
            </aside>
          </div>
        </div>
      </div>
    </div>
  );
}
